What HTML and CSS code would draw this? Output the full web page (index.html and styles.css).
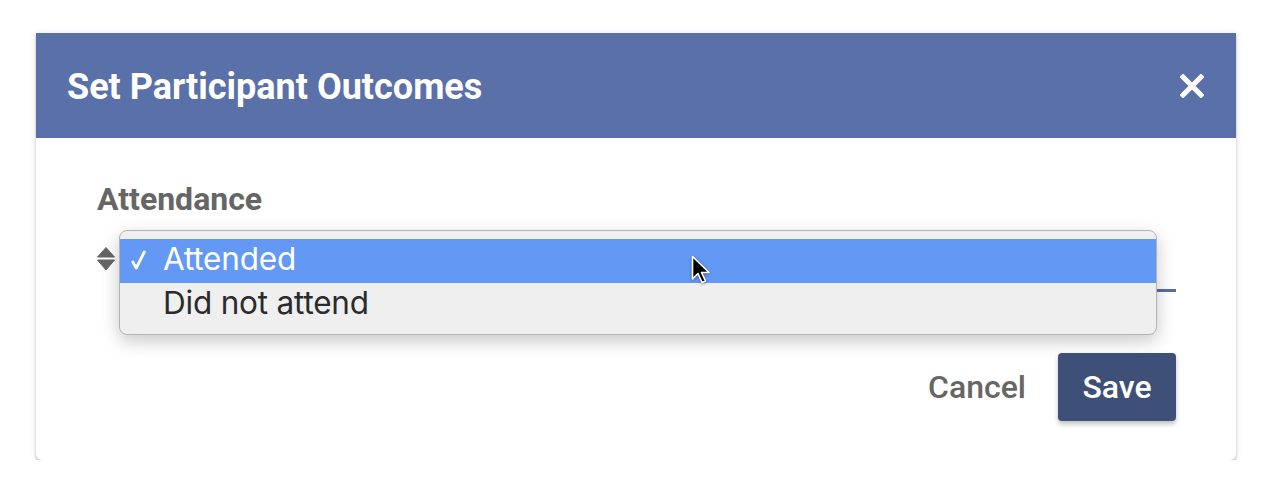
FILE: index.html
```html
<!DOCTYPE html>
<html lang="en">
<head>
<meta charset="utf-8">
<title>Set Participant Outcomes</title>
<link rel="stylesheet" href="styles.css">
</head>
<body>
  <div class="modal">
    <div class="modal-header">
      <h1 class="modal-title">Set Participant Outcomes</h1>
      <button class="close-btn" aria-label="Close">
        <svg width="24" height="24" viewBox="0 0 24 24"><path d="M3 3 L21 21 M21 3 L3 21" stroke="#fff" stroke-width="5" stroke-linecap="square"/></svg>
      </button>
    </div>
    <div class="modal-body">
      <div class="field-label">Attendance</div>
      <div class="field-row">
        <svg class="sort-icon" width="18" height="24" viewBox="0 0 18 24"><path d="M9 0.5 L17.5 10 L0.5 10 Z" fill="#666" stroke="#666" stroke-linejoin="round"/><path d="M0.5 13 L17.5 13 L9 23 Z" fill="#666" stroke="#666" stroke-linejoin="round"/></svg>
        <div class="select-box"></div>
        <div class="popup">
          <div class="option selected"><span class="check"><svg width="15" height="20" viewBox="0 0 15 20"><path d="M1.8 12 L5.3 18 L13.3 2" fill="none" stroke="#fff" stroke-width="2.8" stroke-linecap="round" stroke-linejoin="round"/></svg></span>Attended</div>
          <div class="option"><span class="check"></span>Did not attend</div>
        </div>
        <svg class="cursor" width="22" height="32" viewBox="0 0 22 32"><path d="M1.5 1.5 L1.5 24 L7 18.5 L11 27.5 L14.5 26 L10.5 17.5 L18 17.5 Z" fill="#000" stroke="#fff" stroke-width="1.6" stroke-linejoin="round"/></svg>
      </div>
      <div class="modal-footer">
        <button class="btn-cancel">Cancel</button>
        <button class="btn-save">Save</button>
      </div>
    </div>
  </div>
</body>
</html>
```
FILE: styles.css
```css
* { box-sizing: border-box; }
html, body { margin: 0; padding: 0; background: #fff; }
body {
  padding: 33px 38px 0 36px;
  font-family: Roboto, "Liberation Sans", sans-serif;
}
.modal {
  width: 1200px;
  background: #fff;
  border-radius: 0 0 6px 6px;
  box-shadow: 0 2px 3px rgba(0,0,0,0.25), 0 0 8px rgba(0,0,0,0.08);
}
.modal-header {
  height: 105px;
  background: #5a70a8;
  display: flex;
  align-items: center;
  justify-content: space-between;
  padding: 0 32px 0 31px;
}
.modal-title {
  margin: 0;
  color: #fff;
  font-size: 36px;
  font-weight: 700;
  line-height: 40px;
  padding-top: 2px;
}
.close-btn {
  background: none;
  border: 0;
  padding: 0;
  width: 24px;
  height: 24px;
  display: flex;
}
.modal-body {
  padding: 43px 60px 39px 61px;
}
.field-label {
  font-size: 32px;
  font-weight: 700;
  color: #666;
  line-height: 37px;
}
.field-row {
  position: relative;
  margin-top: 10px;
  height: 64px;
  display: flex;
  align-items: center;
}
.sort-icon { flex: none; margin-top: -3px; }
.select-box {
  flex: 1;
  align-self: stretch;
  margin-left: 5px;
  border-bottom: 3px solid #5a6ca3;
}
.popup {
  position: absolute;
  left: 22px;
  top: 2px;
  width: 1038px;
  height: 105px;
  background: #efefef;
  border: 1px solid #b3b3b3;
  border-radius: 8px;
  padding-top: 8px;
  box-shadow: 0 6px 18px rgba(0,0,0,0.22);
  font-family: Inter, "Noto Sans", sans-serif;
  font-size: 31.5px;
}
.option {
  height: 44px;
  display: flex;
  align-items: center;
  padding-bottom: 5px;
  color: #2b2b2b;
  letter-spacing: -0.2px;
}
.option.selected {
  background: #6398f5;
  color: #fff;
}
.check {
  width: 43px;
  padding-left: 11px;
  display: flex;
  align-items: center;
  padding-top: 3px;
}
.cursor {
  position: absolute;
  left: 594px;
  top: 27px;
  filter: drop-shadow(0 1px 1.5px rgba(0,0,0,0.4));
}
.modal-footer {
  margin-top: 61px;
  display: flex;
  justify-content: flex-end;
  align-items: center;
  gap: 32px;
}
.btn-cancel {
  background: none;
  border: 0;
  padding: 0;
  font-family: Roboto, sans-serif;
  font-size: 32px;
  font-weight: 500;
  color: #666;
}
.btn-save {
  width: 118px;
  height: 68px;
  background: #3f5078;
  border: 0;
  border-radius: 4px;
  color: #fff;
  font-family: Roboto, sans-serif;
  font-size: 32px;
  font-weight: 500;
  box-shadow: 0 3px 5px rgba(0,0,0,0.25);
}
```
